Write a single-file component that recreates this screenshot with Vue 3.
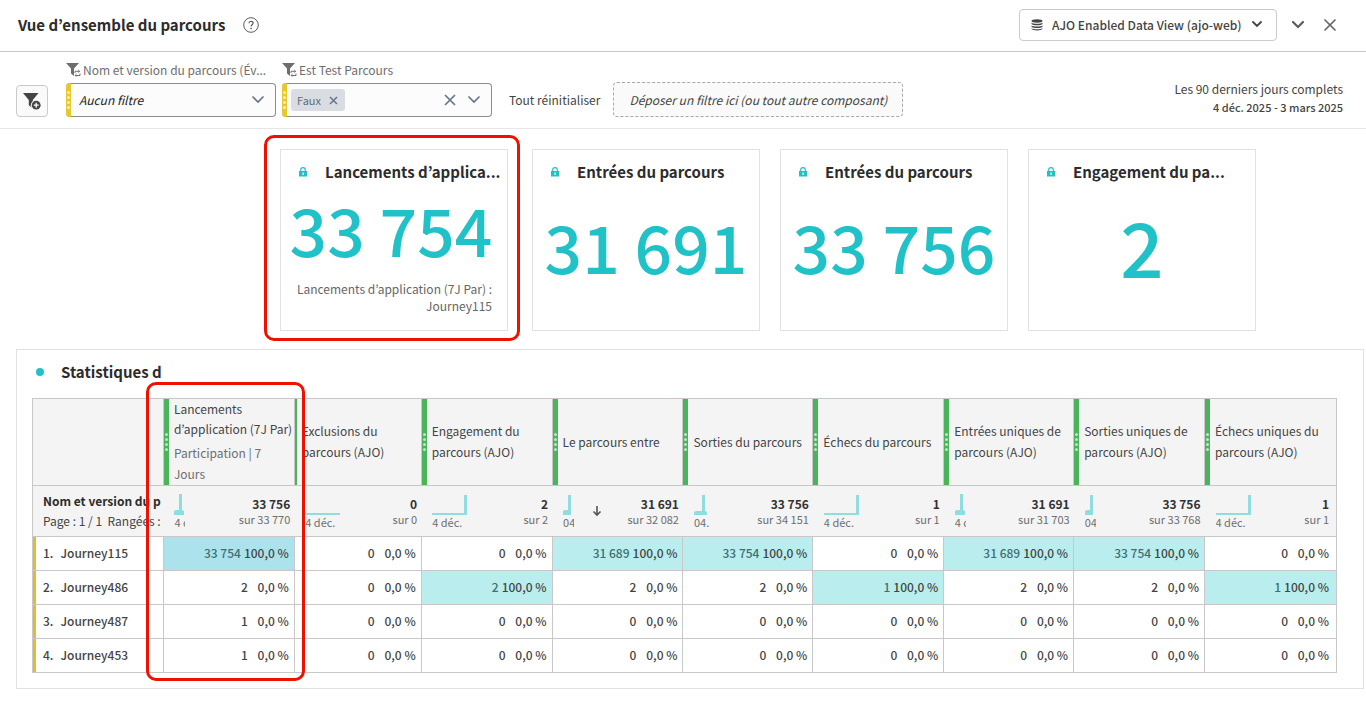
<script setup>
const cards = [
  { title: 'Lancements d’applica...', value: '33 754', note: ['Lancements d’application (7J Par) :', 'Journey115'], marked: true },
  { title: 'Entrées du parcours', value: '31 691' },
  { title: 'Entrées du parcours', value: '33 756' },
  { title: 'Engagement du pa...', value: '2', large: true },
]

const shapes = {
  spike: { w: 10, date: '4 déc.', d: 'M0 22V18L2 17H5V1H8V17L10 18V22z', clip: 11 },
  flat: { w: 35, date: '4 déc.', d: 'M0 20H35V22H0z', clip: 40 },
  step: { w: 35, date: '4 déc.', d: 'M0 20H32V2H35V22H0z', clip: 40 },
  spikeDate: { w: 10, date: '04. déc.', d: 'M0 22V18L2 17H5V2H8V22z', clip: 11 },
  spikeWide: { w: 13, date: '04. déc.', d: 'M0 22V19L2 18H8V2H11V18L13 19V22z', clip: 15 },
}

const columns = [
  { lines: ['Lancements', 'd’application (7J Par)'], sub: ['Participation | 7', 'Jours'], total: '33 756', of: 'sur 33 770', spark: 'spike', width: 131 },
  { lines: ['Exclusions du', 'parcours (AJO)'], total: '0', of: 'sur 0', spark: 'flat', width: 127 },
  { lines: ['Engagement du', 'parcours (AJO)'], total: '2', of: 'sur 2', spark: 'step', width: 131 },
  { lines: ['Le parcours entre'], total: '31 691', of: 'sur 32 082', spark: 'spikeDate', width: 131, sorted: true },
  { lines: ['Sorties du parcours'], total: '33 756', of: 'sur 34 151', spark: 'spikeWide', width: 130 },
  { lines: ['Échecs du parcours'], total: '1', of: 'sur 1', spark: 'step', width: 131 },
  { lines: ['Entrées uniques de', 'parcours (AJO)'], total: '31 691', of: 'sur 31 703', spark: 'spike', width: 130 },
  { lines: ['Sorties uniques de', 'parcours (AJO)'], total: '33 756', of: 'sur 33 768', spark: 'spikeDate', width: 131 },
  { lines: ['Échecs uniques du', 'parcours (AJO)'], total: '1', of: 'sur 1', spark: 'step', width: 132 },
]
const nameWidth = 131
const totalWidth = columns.reduce((sum, c) => sum + c.width, nameWidth)
const share = (w) => ({ width: (w / totalWidth) * 100 + '%' })

const rows = [
  { name: 'Journey115', cells: ['33 754', '0', '0', '31 689', '33 754', '0', '31 689', '33 754', '0'], full: [0, 3, 4, 6, 7] },
  { name: 'Journey486', cells: ['2', '0', '2', '2', '2', '1', '2', '2', '1'], full: [2, 5, 8] },
  { name: 'Journey487', cells: ['1', '0', '0', '0', '0', '0', '0', '0', '0'], full: [] },
  { name: 'Journey453', cells: ['1', '0', '0', '0', '0', '0', '0', '0', '0'], full: [] },
]
</script>

<template>
  <div class="page">
    <header class="top">
      <h1>Vue d’ensemble du parcours</h1>
      <button class="plain help" aria-label="Aide">
        <svg width="16" height="16" viewBox="0 0 16 16" fill="none" stroke="#5c5c5c">
          <circle cx="8" cy="8" r="7.3" />
          <path d="M5.9 6.3C6 4.900 6.900 4.300 8 4.300c1.200 0 2.100.7 2.100 1.800 0 1.600-2 1.700-2 3.300" stroke-width="1.200" />
          <circle cx="8.100" cy="11.500" r=".4" fill="#5c5c5c" />
        </svg>
      </button>
      <div class="top-right">
        <div class="view">
          <svg width="12" height="12" viewBox="0 0 12 12" fill="#444">
            <ellipse cx="6" cy="2" rx="5.500" ry="1.700" />
            <path d="M.5 3.700c1.500 1.300 9.500 1.300 11 0v1.300c-1 1.700-10 1.700-11 0z" />
            <path d="M.5 6.500c1.500 1.300 9.500 1.300 11 0v1.300c-1 1.700-10 1.700-11 0z" />
            <path d="M.5 9.200c1.500 1.300 9.500 1.300 11 0v.8c-1 1.900-10 1.900-11 0z" />
          </svg>
          <select aria-label="Vue de données"><option>AJO Enabled Data View (ajo-web)</option></select>
          <svg width="10" height="7" viewBox="0 0 10 7" fill="none" stroke="#444" stroke-width="1.800" stroke-linecap="round"><path d="M1 1l4 4 4-4" /></svg>
        </div>
        <button class="plain" aria-label="Réduire">
          <svg width="14" height="9" viewBox="0 0 14 9" fill="none" stroke="#5c5c5c" stroke-width="2.200" stroke-linecap="round"><path d="M2 2l5 5 5-5" /></svg>
        </button>
        <button class="plain" aria-label="Fermer">
          <svg width="14" height="14" viewBox="0 0 14 14" fill="none" stroke="#666" stroke-width="1.700" stroke-linecap="round"><path d="M2 2l10 10M12 2L2 12" /></svg>
        </button>
      </div>
    </header>

    <section class="filters">
      <button class="add" aria-label="Ajouter un filtre">
        <svg width="20" height="20" viewBox="0 0 20 20">
          <path d="M1 2h15.500l-5.700 7v8.500L6.800 14.300V9z" fill="#444" />
          <circle cx="14.200" cy="14.200" r="5.400" fill="#fafafa" />
          <circle cx="14.200" cy="14.200" r="4.400" fill="#444" />
          <path d="M14.200 11.700v5M11.700 14.200h5" stroke="#fff" stroke-width="1.300" />
        </svg>
      </button>
      <div class="filter">
        <label for="journey">
          <svg width="15" height="14" viewBox="0 0 15 14">
            <path d="M0 0h13L8 5.500V13L5 10.500V5.500z" fill="#6e6e6e" />
            <path d="M8 6.500h7.500v8H8z" fill="#fff" />
            <path d="M9 10V8.300h4.500M12.300 7l1.400 1.300-1.400 1.200M14 10.500v2H9.300M10.500 11l-1.400 1.400 1.400 1.300" fill="none" stroke="#6e6e6e" />
          </svg>
          <span>Nom et version du parcours (Év...</span>
        </label>
        <div class="box">
          <i class="grip yellow"><b v-for="n in 4" :key="n"></b></i>
          <select id="journey" class="italic"><option>Aucun filtre</option></select>
          <svg width="14" height="8" viewBox="0 0 14 8" fill="none" stroke="#67758a" stroke-width="1.700" stroke-linecap="round"><path d="M2 1l5 5 5-5" /></svg>
        </div>
      </div>
      <div class="filter">
        <label for="test">
          <svg width="15" height="14" viewBox="0 0 15 14">
            <path d="M0 0h13L8 5.500V13L5 10.500V5.500z" fill="#6e6e6e" />
            <path d="M8 6.500h7.500v8H8z" fill="#fff" />
            <path d="M9 10V8.300h4.500M12.300 7l1.400 1.300-1.400 1.200M14 10.500v2H9.300M10.500 11l-1.400 1.400 1.400 1.300" fill="none" stroke="#6e6e6e" />
          </svg>
          <span>Est Test Parcours</span>
        </label>
        <div class="box">
          <i class="grip yellow"><b v-for="n in 4" :key="n"></b></i>
          <span class="chip">Faux
            <button class="plain" aria-label="Retirer Faux">
              <svg width="9" height="9" viewBox="0 0 9 9" fill="none" stroke="#67758a" stroke-width="1.500"><path d="M1 1l7 7M8 1L1 8" /></svg>
            </button>
          </span>
          <input id="test" type="text" />
          <button class="plain" aria-label="Effacer">
            <svg width="12" height="12" viewBox="0 0 12 12" fill="none" stroke="#67758a" stroke-width="1.700"><path d="M1 1l10 10M11 1L1 11" /></svg>
          </button>
          <button class="plain open" aria-label="Ouvrir">
            <svg width="14" height="8" viewBox="0 0 14 8" fill="none" stroke="#67758a" stroke-width="1.700" stroke-linecap="round"><path d="M2 1l5 5 5-5" /></svg>
          </button>
        </div>
      </div>
      <button class="plain reset">Tout réinitialiser</button>
      <div class="drop">Déposer un filtre ici (ou tout autre composant)</div>
      <div class="dates">
        <div>Les 90 derniers jours complets</div>
        <strong>4 déc. 2025 - 3 mars 2025</strong>
      </div>
    </section>

    <section class="cards">
      <article v-for="(c, i) in cards" :key="i" class="card" :class="{ marked: c.marked }">
        <header>
          <svg width="8" height="10" viewBox="0 0 8 10">
            <path d="M0 4h8v5.500H0z" fill="#20c1c7" />
            <path d="M1.700 4.500V3a2.300 2.300 0 0 1 4.600 0v1.500" fill="none" stroke="#20c1c7" stroke-width="1.200" />
            <path d="M3.500 5.500h1.200v2.500H3.500z" fill="#fff" />
          </svg>
          <h2>{{ c.title }}</h2>
        </header>
        <div class="value" :class="{ large: c.large }">{{ c.value }}</div>
        <p v-if="c.note"><span v-for="l in c.note" :key="l">{{ l }}</span></p>
        <div v-if="c.marked" class="mark"></div>
      </article>
    </section>

    <section class="panel">
      <header><span class="dot"></span><h2>Statistiques d</h2></header>
      <div class="holder">
        <table>
          <colgroup>
            <col :style="share(nameWidth)" />
            <col v-for="(c, i) in columns" :key="i" :style="share(c.width)" />
          </colgroup>
          <thead>
            <tr class="heads">
              <td></td>
              <th v-for="(c, i) in columns" :key="i" scope="col">
                <div class="head" :class="{ thin: i === 1 }">
                  <i class="grip green"><template v-if="i !== 1"><b v-for="n in 4" :key="n"></b></template></i>
                  <div class="label">
                    <span v-for="l in c.lines" :key="l" :class="{ tight: c.sub }">{{ l }}</span>
                    <div v-if="c.sub" class="sub"><span v-for="l in c.sub" :key="l">{{ l }}</span></div>
                  </div>
                </div>
              </th>
            </tr>
            <tr class="totals">
              <th scope="row">
                <div class="name">Nom et version du p</div>
                <div class="pager">Page : 1 / 1&nbsp; Rangées :</div>
              </th>
              <td v-for="(c, i) in columns" :key="i">
                <div class="total">
                  <div class="spark" :style="{ width: shapes[c.spark].clip + 'px' }">
                    <svg :width="shapes[c.spark].w" height="22" :viewBox="`0 0 ${shapes[c.spark].w} 22`">
                      <path :d="shapes[c.spark].d" fill="#90dce0" />
                    </svg>
                    <span>{{ shapes[c.spark].date }}</span>
                  </div>
                  <svg v-if="c.sorted" class="arrow" width="10" height="12" viewBox="0 0 10 12" fill="none" stroke="#555" stroke-width="1.600"><path d="M5 1v9M1.500 6.500L5 10l3.500-3.500" /></svg>
                  <div class="sum"><strong>{{ c.total }}</strong><span>{{ c.of }}</span></div>
                </div>
              </td>
            </tr>
          </thead>
          <tbody>
            <tr v-for="(r, ri) in rows" :key="r.name">
              <th scope="row"><div class="row-name"><span>{{ ri + 1 }}.</span><span>{{ r.name }}</span></div></th>
              <td v-for="(v, i) in r.cells" :key="i" :class="{ full: r.full.includes(i), first: i === 0 }">
                <div class="cell"><span>{{ v }}</span><span class="pct">{{ r.full.includes(i) ? '100,0 %' : '0,0 %' }}</span></div>
              </td>
            </tr>
          </tbody>
        </table>
        <div class="mark"></div>
      </div>
    </section>
  </div>
</template>

<style>
body {
  background: #fff;
}
</style>

<style scoped>
* {
  box-sizing: border-box;
}
.page {
  font-family: "Noto Sans CJK KR", "Noto Sans", "Liberation Sans", sans-serif;
  font-size: 12px;
  line-height: 20px;
  color: #444;
}
h1, h2, p {
  margin: 0;
}
button, select, input {
  font: inherit;
  color: inherit;
}
svg {
  display: block;
  flex: none;
}
.plain {
  border: 0;
  padding: 0;
  background: none;
}
select {
  appearance: none;
  border: 0;
  background: transparent;
  padding: 0;
  flex: 1;
  min-width: 0;
}
.top {
  display: flex;
  align-items: center;
  height: 52px;
  padding: 0 29px 2px 18px;
  border-bottom: 1px solid #c8c8c8;
}
h1 {
  font-size: 15px;
  line-height: 24px;
  color: #2c2c2c;
}
.help {
  margin-left: 18px;
}
.top-right {
  display: flex;
  align-items: center;
  gap: 18px;
  margin-left: auto;
}
.top-right > button {
  width: 14px;
}
.view {
  display: flex;
  align-items: center;
  gap: 9px;
  width: 258px;
  height: 32px;
  padding: 0 14px 0 11px;
  margin-right: -4px;
  border: 1px solid #cacaca;
  border-radius: 4px;
  font-weight: 500;
}
.filters {
  display: flex;
  align-items: flex-end;
  height: 77px;
  padding: 0 23px 11px 16px;
  border-bottom: 1px solid #e6e6e6;
}
.add {
  display: flex;
  align-items: center;
  justify-content: center;
  width: 32px;
  height: 32px;
  padding: 0;
  margin-right: 18px;
  background: #fafafa;
  border: 1px solid #cacaca;
  border-radius: 4px;
}
.filter {
  width: 210px;
  margin-right: 6px;
}
.filter label {
  display: flex;
  align-items: center;
  gap: 2px;
  height: 26px;
  color: #6e6e6e;
  white-space: nowrap;
}
.box {
  display: flex;
  align-items: center;
  height: 34px;
  padding-right: 10px;
  background: #fcfcfc;
  border: 1px solid #8c8c8c;
  border-left: 0;
  border-radius: 4px;
}
.box select, .box input {
  color: #222;
}
.box input {
  flex: 1;
  min-width: 0;
  border: 0;
  padding: 0;
  background: transparent;
}
.box .open {
  margin-left: 11px;
}
.italic {
  margin-left: 8px;
  font-style: italic;
}
.grip {
  display: flex;
  flex: none;
  flex-direction: column;
  align-items: center;
  justify-content: center;
  gap: 2px;
  width: 5px;
}
.grip b {
  width: 3px;
  height: 3px;
  border-radius: 50%;
  background: #fff;
  opacity: .65;
}
.yellow {
  height: 34px;
  background: #e8c92d;
  border-radius: 4px 0 0 4px;
}
.chip {
  display: flex;
  align-items: center;
  gap: 8px;
  height: 22px;
  margin-left: 4px;
  padding: 0 7px 0 6px;
  border-radius: 3px;
  background: #d9dde2;
  color: #5d6b7e;
  font-size: 11px;
}
.reset {
  height: 34px;
  margin: 0 13px 0 11px;
}
.drop {
  width: 290px;
  height: 35px;
  line-height: 33px;
  text-align: center;
  white-space: nowrap;
  font-style: italic;
  border: 1px dashed #a8a8a8;
  border-radius: 4px;
  background: #fafafa;
}
.dates {
  margin: 0 0 2px auto;
  text-align: right;
}
.dates strong {
  display: block;
  font-size: 11px;
  font-weight: 500;
  line-height: 16px;
}
.cards {
  display: flex;
  gap: 20px;
  padding: 20px 110px 18px 280px;
}
.card {
  position: relative;
  flex: 1;
  min-width: 0;
  height: 182px;
  padding: 10px 11px 0;
  border: 1px solid #e1e1e1;
}
.card.marked {
  margin-right: 4px;
}
.card header {
  display: flex;
  align-items: center;
  gap: 18px;
  padding-left: 7px;
}
.card h2, .panel h2 {
  font-size: 15px;
  line-height: 24px;
  color: #2c2c2c;
  white-space: nowrap;
}
.value {
  margin: 0 -10px;
  font-size: 66px;
  line-height: 122px;
  text-align: center;
  font-weight: 500;
  color: #20c1c7;
  white-space: nowrap;
}
.value.large {
  font-size: 76px;
}
.marked .value {
  margin: 0 -8px 0 -14px;
  line-height: 88px;
}
.card p {
  padding: 8px 4px 0 0;
  line-height: 17px;
  text-align: right;
  color: #666;
}
.card p span {
  display: block;
  white-space: nowrap;
}
.mark {
  position: absolute;
  border: 3px solid #ee1100;
  border-radius: 10px;
  pointer-events: none;
}
.card .mark {
  inset: -15px -13px -11px -17px;
}
.panel {
  margin: 0 2px 0 16px;
  padding: 10px 26px 15px 15px;
  border: 1px solid #e1e1e1;
}
.panel header {
  display: flex;
  align-items: center;
  gap: 17px;
  height: 24px;
  padding-left: 4px;
  margin-bottom: 14px;
}
.dot {
  width: 8px;
  height: 8px;
  border-radius: 50%;
  background: #20c1c7;
}
.holder {
  position: relative;
}
.holder .mark {
  top: -16px;
  bottom: -8px;
  left: calc(10.04% - 17px);
  width: calc(10.04% + 28px);
}
table {
  width: 100%;
  table-layout: fixed;
  border-collapse: collapse;
  border: 1px solid #c8c8c8;
}
th, td {
  padding: 0;
  font-weight: 400;
  text-align: left;
}
thead {
  background: #f4f4f4;
}
.heads td, .heads th, .totals {
  border: 1px solid #c8c8c8;
}
.head {
  display: flex;
  height: 86px;
}
.green {
  background: #4bb35b;
}
.label {
  display: flex;
  flex-direction: column;
  justify-content: center;
  padding: 0 0 2px 5px;
  line-height: 21px;
  white-space: nowrap;
}
.label .tight {
  line-height: 20px;
}
.thin .green {
  width: 2px;
}
.sub {
  margin-top: 3px;
  color: #6e6e6e;
}
.sub span {
  display: block;
}
.totals {
  height: 51px;
}
.totals th {
  padding-bottom: 1px;
}
.name, .pager {
  padding-left: 10px;
  line-height: 20px;
  white-space: nowrap;
}
.name {
  font-weight: 700;
  color: #2c2c2c;
}
.total {
  display: flex;
  align-items: center;
  height: 49px;
  padding: 0 4px 0 11px;
}
.spark {
  overflow: hidden;
  font-size: 11px;
  line-height: 14px;
  white-space: nowrap;
  color: #6e6e6e;
}
.arrow {
  margin-left: 18px;
}
.sum {
  margin-left: auto;
  text-align: right;
  font-size: 11px;
  line-height: 14px;
  color: #6e6e6e;
}
.sum strong {
  display: block;
  font-size: 12px;
  line-height: 16px;
  color: #333;
}
.sum span {
  display: block;
}
td:last-child .total, td:last-child .cell {
  padding-right: 7px;
}
tbody tr {
  height: 34px;
}
tbody th, tbody td {
  border: 1px solid #c8c8c8;
}
.row-name {
  display: flex;
  align-items: center;
  gap: 7px;
  height: 33px;
  padding: 0 0 2px 7px;
  border-left: 3px solid #e0bd2b;
  font-weight: 500;
}
.cell {
  display: flex;
  justify-content: flex-end;
  padding: 0 5px 2px 0;
  font-weight: 500;
  white-space: nowrap;
}
.pct {
  min-width: 38px;
  margin-left: 3px;
  text-align: right;
}
.full {
  background: #b9edee;
}
.full.first {
  background: #ace2eb;
}
.full span:first-child {
  color: #3f6f73;
}
</style>
